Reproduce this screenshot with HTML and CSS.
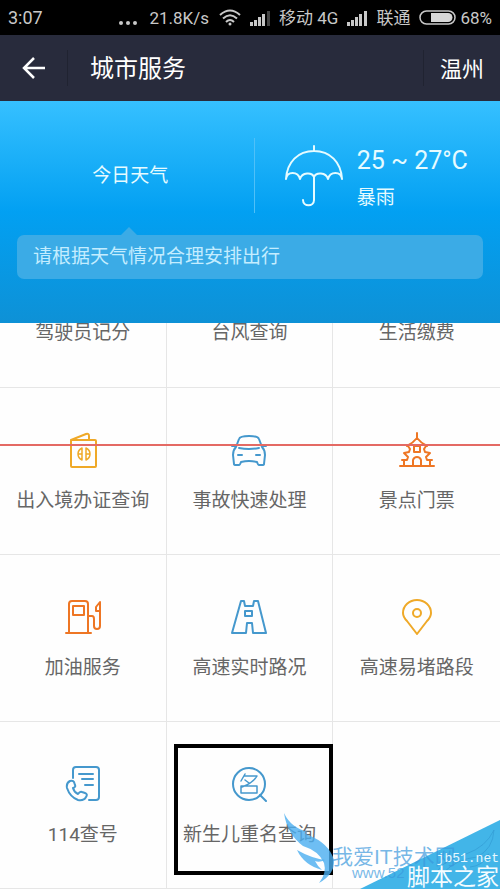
FILE: index.html
```html
<!DOCTYPE html>
<html lang="zh-CN">
<head>
<meta charset="utf-8">
<meta name="viewport" content="width=device-width, initial-scale=1">
<title>城市服务</title>
<link rel="stylesheet" href="styles.css">
</head>
<body>
<div class="screen">
  <div class="status">
    <span class="clock">3:07</span>
    <span class="dots"><i></i><i></i><i></i></span>
    <span class="speed">21.8K/s</span>
    <svg class="wifi" width="22" height="17" viewBox="0 0 22 17" fill="none" stroke="#c8c8c8" stroke-width="2"><path d="M1 6Q11-3 21 6M4 9.500Q11 3 18 9.500M7 13Q11 9 15 13"/><circle cx="11" cy="15" r="1.500" fill="#c8c8c8" stroke="none"/></svg>
    <svg class="signal" width="20" height="16" viewBox="0 0 20 16" fill="#c8c8c8"><path d="M0 12h3v4H0zM4 10h3v6H4zM8 7h3v9H8zM12 4h3v12h-3z"/><path d="M17 1h3v15h-3z" fill="#444"/></svg>
    <span class="carrier">移动 4G</span>
    <svg class="signal" width="20" height="16" viewBox="0 0 20 16" fill="#c8c8c8"><path d="M0 12h3v4H0zM4 10h3v6H4zM8 7h3v9H8zM12 4h3v12h-3zM17 1h3v15h-3z"/></svg>
    <span class="carrier">联通</span>
    <svg class="battery" width="37" height="15" viewBox="0 0 37 15"><rect x="1" y="1" width="35" height="13" rx="6.500" fill="none" stroke="#c8c8c8" stroke-width="1.500"/><path d="M12 3h17a4.500 4.500 0 0 1 0 9H12z" fill="#d8d8d8"/></svg>
    <span class="percent">68%</span>
  </div>

  <header class="bar">
    <button class="back" type="button" aria-label="返回"><svg width="24" height="24" viewBox="0 0 24 24" fill="none" stroke="#fff" stroke-width="2.500"><path d="M23 12H2M12 2L2 12l10 10"/></svg></button>
    <h1 class="title">城市服务</h1>
    <button class="city" type="button">温州</button>
  </header>

  <section class="weather">
    <div class="today">
      <div class="day">今日天气</div>
      <div class="forecast">
        <svg width="60" height="64" viewBox="0 0 60 64" fill="none" stroke="#e6fbff" stroke-width="2" stroke-linecap="round" stroke-linejoin="round"><path d="M30 2v4M2 35C3 18 14 7 30 7s27 11 28 28c-1-8-12-8-14 0-2-7-12-7-14-2-2-5-12-5-14 2-2-8-13-8-14 0M30 33v23c0 7-11 7-11 0"/></svg>
        <div class="reading"><div class="temp">25 ~ 27°C</div><div class="sky">暴雨</div></div>
      </div>
    </div>
    <p class="tip">请根据天气情况合理安排出行</p>
  </section>

  <main class="services">
    <a class="cell cut" href="#">驾驶员记分</a>
    <a class="cell cut" href="#">台风查询</a>
    <a class="cell cut" href="#">生活缴费</a>

    <a class="cell yellow" href="#"><svg class="icon" viewBox="0 0 36 36"><rect x="6" y="8" width="25" height="27" rx="1"/><path d="M6 8l15-6q3-1 3 2v4"/><path class="thin" d="M17 16q-4 2-4 6t4 6zM21 16q4 2 4 6t-4 6zM13 22h4M21 22h4"/></svg>出入境办证查询</a>
    <a class="cell blue" href="#"><svg class="icon" viewBox="0 0 36 36"><path d="M5 15L8 7q1-3 10-3t10 3l3 8q3 3 3 8l-1 9q0 1-2 1h-3q-1 0-2-3-8-2-16 0-1 3-2 3H5q-2 0-2-1l-1-9q0-5 3-8zM1 14h4M31 14h4M8 16q10 2 20 0M7 23h4M25 23h4"/></svg>事故快速处理</a>
    <a class="cell orange" href="#"><svg class="icon" viewBox="0 0 36 36"><path d="M18 1v5M8 14q6-3 10-8 4 5 10 8M9 14l2 3-1 3-5 1 4 4-1 3H3M27 14l-2 3 1 3 5 1-4 4 1 3h5M5 28v6M31 28v6M1 34h34M14 34v-6q1-3 4-3t4 3v6"/><rect x="15" y="14" width="6" height="6"/></svg>景点门票</a>

    <a class="cell orange" href="#"><svg class="icon" viewBox="0 0 36 36"><path d="M4 34V5q0-3 3-3h13q3 0 3 3v29M1 34h25M23 17h4q2 0 2 3v7q0 3 3 3t3-3V10M35 3l-4 5v4h4z"/><rect x="8" y="7" width="11" height="9"/></svg>加油服务</a>
    <a class="cell blue" href="#"><svg class="icon" viewBox="0 0 36 36"><path d="M10 2h3l1 5h8l1-5h4l8 32H22l-1-10h-5l-1 10H1z"/><rect x="14" y="12" width="7" height="5"/></svg>高速实时路况</a>
    <a class="cell yellow" href="#"><svg class="icon" viewBox="0 0 36 36"><path d="M18 35L8 22q-4-4-4-8a14 13 0 0 1 28 0q0 4-4 8z"/><circle cx="18" cy="14" r="4"/></svg>高速易堵路段</a>

    <a class="cell blue" href="#"><svg class="icon" viewBox="0 0 36 36"><path d="M8 12V4q0-3 3-3h20q3 0 3 3v27q0 3-3 3h-7M14 8h14M17 13h11M20 19h8"/><path d="M5 15q-4 2-3 7 3 9 11 12 6 1 8-3 2-3-1-4l-3-1q-2-1-4 2-4-2-5-6 3-1 2-3l-1-3q-1-2-4-1z"/></svg>114查号</a>
    <a class="cell blue marked" href="#"><svg class="icon" viewBox="0 0 36 36"><circle cx="18" cy="18" r="16"/><path d="M29 29l6 6"/><path class="thin" d="M14 8l-4 7M13 10h13q-4 7-15 11M14 14l4 3M10 20h16v7H10z"/></svg>新生儿重名查询</a>
    <div class="cell"></div>
  </main>

  <div class="redline"></div>

  <svg class="stamp" width="240" height="80" viewBox="0 0 240 80">
    <path d="M100 80L240 11v69z" fill="#42b5e8"/>
    <g fill="#4aaef0" fill-opacity=".8"><path d="M24 4Q31 19 48 23q-6 0 0 3 21 8 26 25 1 14-15 23 8-10 5-20-5-12-21-17Q27 25 24 4z"/><path d="M37 41q14 8 28 10-6 3-10 1 3 6 7 9Q44 56 37 41z"/></g>
    <path d="M178 61Q186 50 206 45q20-7 28-24-1 19-17 27 8 0 12-3-6 12-19 13M184 63q13-13 33-15" fill="none" stroke="#3199d2" stroke-opacity=".65"/>
    <text class="site" x="72" y="55">我爱IT技术网</text>
    <text class="url" x="92" y="69">www.52</text>
    <text class="host" x="239" y="53" text-anchor="end">jb51.net</text>
    <text class="name" x="239" y="76" text-anchor="end">脚本之家</text>
  </svg>
</div>
</body>
</html>
```
FILE: styles.css
```css
* { box-sizing: border-box; }
body {
  margin: 0;
  background: #fefefe;
  font-family: Roboto, "Noto Sans CJK SC", sans-serif;
  color: #666;
}
.screen { position: relative; overflow: hidden; min-height: 100vh; }

.status {
  display: flex;
  align-items: center;
  height: 35px;
  padding: 0 8px;
  background: #000;
  color: #c8c8c8;
  font-size: 17px;
  line-height: 24px;
  white-space: nowrap;
}
.clock { flex: 1; font-size: 18px; }
.dots { display: flex; gap: 3px; margin: 10px 12px 0 0; }
.dots i { width: 4px; height: 4px; border-radius: 50%; background: #c8c8c8; }
.wifi { margin: 0 9px 0 10px; }
.signal, .carrier { margin-right: 9px; }
.battery { margin-right: 4px; }

.bar {
  display: flex;
  align-items: center;
  height: 66px;
  background: #282b3c;
  color: #fff;
}
.bar button {
  border: 0;
  background: none;
  color: inherit;
  font: inherit;
  height: 36px;
  line-height: 36px;
}
.bar .back { display: flex; align-items: center; width: 68px; padding: 0 0 0 22px; border-right: 1px solid #202331; }
.title { flex: 1; margin: 0; padding: 2px 0 0 22px; font-size: 24px; font-weight: 400; line-height: 36px; }
.bar .city { padding: 2px 16px 0; font-size: 22px; border-left: 1px solid #202331; }

.weather {
  height: 222px;
  padding: 37px 17px 0;
  background: linear-gradient(#36c0ff, #02a0f2 50%, #0e91d6);
  color: #e6fbff;
}
.today { display: flex; align-items: center; height: 75px; }
.day {
  flex: 1;
  height: 75px;
  padding-right: 10px;
  border-right: 1px solid #4fc0f8;
  font-size: 19px;
  line-height: 75px;
  text-align: center;
}
.forecast { display: flex; flex: 0 0 49%; align-items: center; gap: 13px; padding-left: 29px; }
.reading { padding-top: 7px; }
.temp { font-size: 25px; line-height: 38px; white-space: nowrap; }
.sky { font-size: 19px; line-height: 36px; }
.tip {
  position: relative;
  margin: 22px 0 0;
  padding: 0 16px;
  border-radius: 7px;
  background: #3babe6;
  color: #c4edff;
  font-size: 19px;
  line-height: 44px;
}
.tip::before {
  content: "";
  position: absolute;
  left: 24%;
  bottom: 100%;
  margin-left: -8px;
  border: 8px solid transparent;
  border-top: 0;
  border-bottom-color: #3babe6;
}

.services { display: grid; grid-template-columns: repeat(3, 1fr); }
.cell {
  position: relative;
  display: flex;
  flex-direction: column;
  align-items: center;
  min-height: 167px;
  padding-top: 44px;
  border-right: 1px solid #e6e6e6;
  border-bottom: 1px solid #e6e6e6;
  color: #666;
  font-size: 19px;
  line-height: 30px;
  white-space: nowrap;
  text-decoration: none;
}
.cell:nth-child(3n) { border-right: 0; }
.cut { min-height: 65px; height: 65px; padding: 0; overflow: hidden; line-height: 20px; }
.icon {
  width: 36px;
  height: 36px;
  margin-bottom: 18px;
  fill: none;
  stroke: currentColor;
  stroke-width: 2;
  stroke-linejoin: round;
  stroke-linecap: round;
}
.thin { stroke-width: 1.5; }
.yellow .icon { color: #efa928; }
.blue .icon { color: #4598cd; }
.orange .icon { color: #ee7624; }
.marked::after {
  content: "";
  position: absolute;
  inset: 22px -1px 13px 7px;
  border: 4px solid #000;
}
.redline { position: absolute; top: 444px; left: 0; right: 0; height: 2px; background: #e46a64; }

.stamp { position: absolute; right: 0; bottom: 0; }
.stamp text { font-family: "Liberation Sans", "Noto Sans CJK SC", sans-serif; }
.stamp .site { fill: #3a98dc; fill-opacity: .7; font-size: 21px; }
.stamp .url { fill: #3a98dc; fill-opacity: .7; font-size: 15px; }
.stamp .host { fill: #e6f8ff; font-family: "Liberation Mono", monospace; font-size: 13px; }
.stamp .name { fill: #f4fcff; font-size: 23px; }
```
